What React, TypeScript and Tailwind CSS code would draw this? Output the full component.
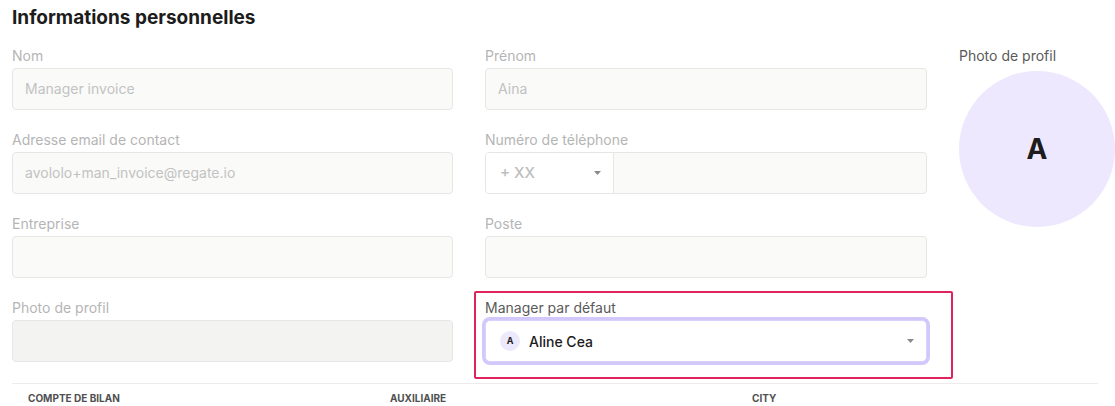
import React from "react"

function Caret() {
	return (
		<svg width="7" height="4" viewBox="0 0 7 4" className="shrink-0">
			<path d="M0 0 H7 L3.5 4 Z" fill="#8a8a8a" />
		</svg>
	)
}

function Field({ label, value, dim = true, bg = "bg-[#fafaf9]" }: { label: string; value?: string; dim?: boolean; bg?: string }) {
	return (
		<div className="flex flex-col">
			<label className={`text-sm leading-5 ${dim ? "text-[#b5b5b5]" : "text-[#5a5a5a]"}`}>{label}</label>
			<div className={`mt-[2px] h-[42px] rounded border border-[#e6e6e5] ${bg} px-3 flex items-center text-sm text-[#c2c2c2]`}>
				{value}
			</div>
		</div>
	)
}

export default function App() {
	return (
		<div className="w-full overflow-hidden bg-white font-['Inter','Liberation_Sans',sans-serif] pl-3 pt-[6px] h-[406px]">
			<h2 className="text-[19px] leading-6 font-bold text-[#1c1c1c]">Informations personnelles</h2>

			<div className="mt-4 grid grid-cols-[441px_442px_156px] gap-x-8">
				<div className="flex flex-col gap-5">
					<Field label="Nom" value="Manager invoice" />
					<Field label="Adresse email de contact" value="avololo+man_invoice@regate.io" />
					<Field label="Entreprise" />
					<Field label="Photo de profil" bg="bg-[#f3f3f2]" />
				</div>

				<div className="flex flex-col gap-5">
					<Field label="Prénom" value="Aina" />
					<div className="flex flex-col">
						<label className="text-sm leading-5 text-[#b5b5b5]">Numéro de téléphone</label>
						<div className="mt-[2px] h-[42px] rounded border border-[#e6e6e5] bg-[#fafaf9] flex overflow-hidden">
							<div className="w-[128px] bg-white border-r border-[#e6e6e5] flex items-center justify-between pl-[14px] pr-[12px]">
								<span className="text-[15px] font-medium text-[#bdbdbd]">+ XX</span>
								<Caret />
							</div>
						</div>
					</div>
					<Field label="Poste" />
					<div className="relative flex flex-col">
						<div className="absolute -top-[7px] -left-[11px] w-[479px] h-[88px] border-2 border-[#e0235c] rounded-[2px] pointer-events-none" />
						<label className="text-sm leading-5 text-[#5a5a5a]">Manager par défaut</label>
						<div className="mt-[2px] h-[42px] rounded-[5px] border border-[#d9d0fc] bg-white ring-[3px] ring-[#d3c8fb] flex items-center pl-[14px] pr-[12px]">
							<div className="w-5 h-5 rounded-full bg-[#ede9fd] flex items-center justify-center text-[9px] font-bold text-[#1c1c1c]">A</div>
							<span className="ml-[9px] text-[14px] font-medium text-[#1c1c1c] flex-1">Aline Cea</span>
							<Caret />
						</div>
					</div>
				</div>

				<div className="flex flex-col">
					<span className="text-sm leading-5 text-[#5a5a5a]">Photo de profil</span>
					<div className="mt-[5px] w-[156px] h-[156px] rounded-full bg-[#ede8fd] flex items-center justify-center">
						<span className="text-[28px] font-bold text-[#1c1c1c]">A</span>
					</div>
				</div>
			</div>

			<div className="mt-[21px] w-[1086px] border-t border-[#ececec] grid grid-cols-3 pt-[7px]">
				<div className="px-4 text-[10px] font-bold text-[#505050] uppercase">Compte de bilan</div>
				<div className="px-4 text-[10px] font-bold text-[#505050] uppercase">Auxiliaire</div>
				<div className="px-4 text-[10px] font-bold text-[#505050] uppercase">City</div>
			</div>
		</div>
	)
}
